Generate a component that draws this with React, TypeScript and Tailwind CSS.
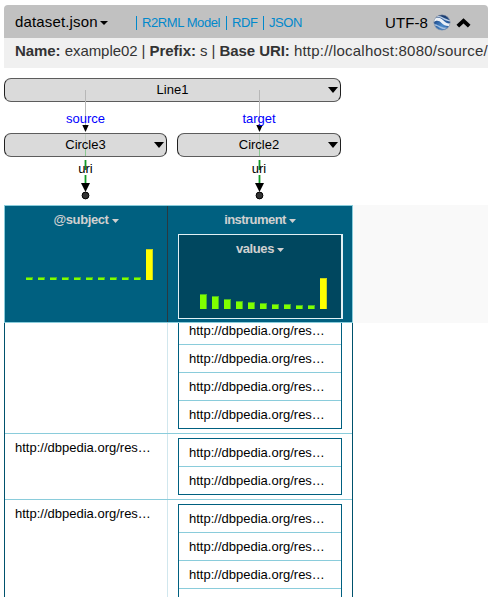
import React from "react";

const URI = "http://dbpedia.org/res…";
const SUBJECT_BARS = [3, 3, 3, 3, 3, 3, 3, 3, 3, 3, 31];
const VALUE_BARS = [15, 13, 10, 8, 7, 6, 5, 5, 4, 4, 31];

function Caret({ className }: { className: string }) {
  return (
    <svg className={"shrink-0 " + className} viewBox="0 0 8 4" preserveAspectRatio="none" fill="currentColor">
      <path d="M0 0H8L4 4Z" />
    </svg>
  );
}

function Divider() {
  return <span className="h-[14px] w-px shrink-0 bg-[#0088cc]" />;
}

function Globe() {
  return (
    <svg className="h-[17px] w-[18px] shrink-0" viewBox="0 0 18 17">
      <defs>
        <radialGradient id="globe" cx="50%" cy="75%" r="70%">
          <stop offset="0" stopColor="#4f8fce" />
          <stop offset="0.55" stopColor="#2d62a5" />
          <stop offset="1" stopColor="#173769" />
        </radialGradient>
        <clipPath id="disc">
          <ellipse cx="9" cy="8.5" rx="8.2" ry="7.8" />
        </clipPath>
      </defs>
      <ellipse cx="9" cy="8.5" rx="8.2" ry="7.8" fill="url(#globe)" />
      <g clipPath="url(#disc)">
        <path d="M1 4C5 2.5 8 4 10.5 6.5C13 9 15.5 10 18 9V11.5C14.5 13 11 11.5 8.5 9C6 6.5 3.5 6 0 8.5Z" fill="#e9eff6" />
        <path d="M4 1.8C9 1.6 12 5.5 17 6L17.5 7.5C12 7.5 9.5 3.4 4 3Z" fill="#b8cce4" />
        <path d="M0 10C4 9 8 14.5 14 13.4L12 15C7.5 15.5 5 11.5 1 11.5Z" fill="#a3bfdf" />
      </g>
      <ellipse cx="9" cy="8.5" rx="8.1" ry="7.7" fill="none" stroke="#98a4b5" strokeWidth="0.6" />
    </svg>
  );
}

function Node({ label, className }: { label: string; className: string }) {
  return (
    <div className={"flex h-6 items-center rounded-[7px] border border-x-[#202020] border-y-[#5c5c5c] bg-[#dadada] pr-[2px] " + className}>
      <span className="relative z-10 min-w-0 flex-1 pl-[2px] text-center">{label}</span>
      <Caret className="-ml-[10px] h-[6px] w-[10px]" />
    </div>
  );
}

function Edges({ x }: { x: number }) {
  return (
    <g>
      <path d={`M${x} 18V54`} stroke="#b7b7b7" strokeWidth="1" />
      <path d={`M${x - 3.2} 53H${x + 3.2}L${x} 60Z`} />
      <path d={`M${x} 62V76`} stroke="#c3cdc3" strokeWidth="1" />
      <path d={`M${x} 76V84`} stroke="#8cc793" strokeWidth="1" />
      <path d={`M${x} 88V98M${x} 103V112`} stroke="#129b27" strokeWidth="1.8" />
      <path d={`M${x - 4.5} 111H${x + 4.5}L${x} 120Z`} />
      <circle cx={x} cy="123.5" r="3.4" fill="#333333" stroke="#000" />
    </g>
  );
}

function Histogram({ data }: { data: number[] }) {
  return (
    <div className="flex h-[31px] items-end gap-[5px]">
      {data.map((h, i) => (
        <span
          key={i}
          className={"w-[7px] border-r border-t " + (i === 10 ? "border-[#c9d31c] bg-[#ffff00]" : "border-[#49b52b] bg-[#7fff00]")}
          style={{ height: h }}
        />
      ))}
    </div>
  );
}

function Heading({ label, className }: { label: string; className: string }) {
  return (
    <div className={"flex h-4 items-center justify-center gap-[3px] text-[13px] font-bold leading-4 text-[#d0d0d0] " + className}>
      <span>{label}</span>
      <Caret className="mt-[2px] h-1 w-[7px]" />
    </div>
  );
}

function Row({ subject, values, className }: { subject?: string; values: string[]; className: string }) {
  return (
    <div className={"flex shrink-0 border-b border-[#8accdb] " + className}>
      <div className="w-[162px] shrink-0 pl-[10px] pt-[5px] leading-[18px]">{subject}</div>
      <div className="w-px shrink-0 bg-[#d1e7ee]" />
      <div className="flex flex-1 flex-col justify-end px-[10px] py-1">
        <div className="divide-y divide-[#8accdb] border border-[#006080]">
          {values.map((value, i) => (
            <div key={i} className="h-7 pl-[10px] leading-[27px] last:h-[27px]">
              {value}
            </div>
          ))}
        </div>
      </div>
    </div>
  );
}

export default function App() {
  return (
    <div className="h-[597px] w-[495px] overflow-hidden bg-white pl-1 pt-[5px] font-['Liberation_Sans',Arial,sans-serif] text-[13px] text-black">
      <div className="w-[484px] overflow-hidden rounded-t-[4px]">
        <div className="flex h-[33px] items-center bg-[#c1c1c1] pl-[11px] pt-[2px]">
          <div className="flex w-[121px] items-center gap-[2px]">
            <span className="text-[15px] tracking-[0.15px]">dataset.json</span>
            <Caret className="h-1 w-2" />
          </div>
          <div className="flex w-[249px] items-center gap-[5px] tracking-[-0.42px] text-[#0088cc]">
            <Divider />
            <span className="w-[79px] whitespace-nowrap">R2RML Model</span>
            <Divider />
            <span className="w-[26px]">RDF</span>
            <Divider />
            <span>JSON</span>
          </div>
          <span className="w-[48px] pt-[2px] text-[15px] tracking-[0.1px]">UTF-8</span>
          <Globe />
          <svg className="ml-[5px] mt-px h-[10px] w-[15px]" viewBox="0 0 15 10">
            <path d="M1.8 8.2L7.5 2.8L13.2 8.2" fill="none" stroke="#000" strokeWidth="3.8" />
          </svg>
        </div>
        <div className="h-[30px] whitespace-nowrap bg-[#f0f0f0] pl-[11px] text-[15px] leading-[26px] tracking-[-0.06px] text-[#333333]">
          <b>Name:</b> example02 | <b>Prefix:</b> s | <b>Base URI:</b>{" "}
          <span className="tracking-[0.22px]">http://localhost:8080/source/</span>
        </div>
      </div>

      <div className="relative h-[137px] pt-[10px]">
        <Node label="Line1" className="w-[337px]" />
        <div className="relative z-10 flex h-[31px] items-center pt-[3px] text-[#0000ff]">
          <span className="w-[163px] text-center">source</span>
          <span className="ml-[10px] w-[164px] text-center">target</span>
        </div>
        <div className="flex">
          <Node label="Circle3" className="w-[163px]" />
          <Node label="Circle2" className="ml-[10px] w-[164px]" />
        </div>
        <div className="relative z-10 flex pt-[2px] leading-5">
          <span className="w-[163px] text-center">uri</span>
          <span className="ml-[10px] w-[164px] text-center">uri</span>
        </div>
        <svg className="absolute left-0 top-1 h-[133px] w-[349px]" viewBox="0 0 349 133">
          <Edges x={81.5} />
          <Edges x={255.5} />
        </svg>
      </div>

      <div className="flex h-[118px] w-[484px] bg-[#f9f9f9]">
        <div className="flex w-[349px] border border-[#8accdb] bg-[#006080]">
          <div className="flex w-[162px] flex-col pt-[6px]">
            <Heading label="@subject" className="tracking-[-0.4px]" />
            <div className="pl-[21px] pt-[21px]">
              <Histogram data={SUBJECT_BARS} />
            </div>
          </div>
          <div className="w-px bg-[#293940]" />
          <div className="flex-1 pl-[10px] pt-[6px]">
            <Heading label="instrument" className="pr-[10px] tracking-[-0.55px]" />
            <div className="mt-[6px] h-[85px] w-[165px] border border-r-2 border-[#e1f0f4] bg-[#00475f] pt-[6px]">
              <Heading label="values" className="tracking-[-0.4px]" />
              <div className="pl-[21px] pt-[21px]">
                <Histogram data={VALUE_BARS} />
              </div>
            </div>
          </div>
        </div>
      </div>

      <div className="flex h-[274px] w-[349px] flex-col overflow-hidden border-x border-[#00526d]">
        <Row values={[URI, URI, URI, URI]} className="h-[111px] overflow-hidden" />
        <Row subject={URI} values={[URI, URI]} className="h-[66px]" />
        <Row subject={URI} values={[URI, URI, URI, ""]} className="h-[122px]" />
      </div>
    </div>
  );
}
